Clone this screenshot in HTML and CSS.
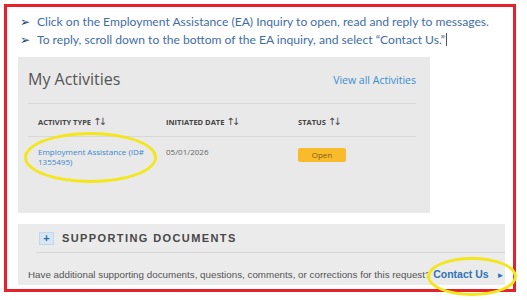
FILE: index.html
```html
<!DOCTYPE html>
<html lang="en">
<head>
  <meta charset="UTF-8" />
  <title>My Activities</title>
  <link rel="stylesheet" href="styles.css">
</head>
<body>

  <div class="frame">
    <ul class="steps">
      <li>Click on the Employment Assistance (EA) Inquiry to open, read and reply to messages.</li>
      <li>To reply, scroll down to the bottom of the EA inquiry, and select “Contact Us.”<span class="caret"></span></li>
    </ul>

    <div class="activities">
      <div class="act-head">
        <h2>My Activities</h2>
        <a class="view-all" href="#">View all Activities</a>
      </div>
      <div class="act-row act-cols">
        <div>ACTIVITY TYPE <span class="sort">↑↓</span></div>
        <div>INITIATED DATE <span class="sort">↑↓</span></div>
        <div>STATUS <span class="sort">↑↓</span></div>
      </div>
      <div class="act-row act-item">
        <a href="#">Employment Assistance (ID#<br>1355495)</a>
        <div>05/01/2026</div>
        <div><span class="badge">Open</span></div>
      </div>
    </div>

    <div class="docs">
      <div class="docs-head">
        <span class="plus">+</span>
        <span class="docs-title">SUPPORTING DOCUMENTS</span>
      </div>
      <p class="docs-text">Have additional supporting documents, questions, comments, or corrections for this request? <a href="#">Contact Us <span class="tri">►</span></a></p>
    </div>

    <!-- highlight rings drawn over the screenshot -->
    <div class="ring ring-activity"></div>
    <div class="ring ring-contact"></div>
  </div>

</body>
</html>
```

FILE: styles.css
```css
body {
  margin: 0;
  background: #fff;
  font-family: 'Open Sans', sans-serif;
}

.frame {
  position: relative;
  box-sizing: border-box;
  margin: 4px;
  width: 512px;
  height: 288px;
  border: 3px solid #e62129;
  padding: 6px 0 0 11px;
}

.steps {
  list-style: none;
  margin: 0;
  padding: 0 0 0 2px;
  font-family: Lato, sans-serif;
  font-size: 12.1px;
  line-height: 18px;
  color: #3f6da6;
}

.steps li {
  height: 18px;
}

.steps li::before {
  content: "➢";
  display: inline-block;
  width: 17px;
  font-family: 'DejaVu Sans', sans-serif;
  font-size: 12px;
  line-height: 18px;
  color: #23477a;
}

.caret {
  display: inline-block;
  width: 1px;
  height: 13px;
  margin-left: 1px;
  vertical-align: -2px;
  background: #555;
}

/* My Activities card */
.activities {
  box-sizing: border-box;
  width: 412px;
  height: 156px;
  margin-top: 8px;
  padding: 0 14px 0 10px;
  background: #e9e9e9;
}

.act-head {
  box-sizing: border-box;
  display: flex;
  justify-content: space-between;
  align-items: center;
  height: 47px;
  padding-bottom: 3px;
  border-bottom: 1px solid #d8d8d8;
}

.act-head h2 {
  margin: 0;
  font-size: 16px;
  font-weight: 400;
  color: #555;
}

.view-all {
  margin-top: 3px;
  font-size: 10.5px;
  color: #3b8cd0;
  text-decoration: none;
}

.act-row {
  display: grid;
  grid-template-columns: 128px 132px 1fr;
  padding-left: 10px;
}

.act-cols {
  height: 33px;
  align-items: center;
  padding-top: 2px;
  box-sizing: border-box;
  border-bottom: 1px solid #d8d8d8;
  font-size: 7.5px;
  font-weight: 700;
  color: #444;
}

.sort {
  font-family: 'DejaVu Sans', sans-serif;
  font-weight: 400;
  font-size: 10px;
  letter-spacing: -3px;
  color: #444;
}

.act-item {
  padding-top: 10px;
  font-size: 8px;
  line-height: 10px;
  color: #666;
}

.act-item a {
  color: #3a87cc;
  text-decoration: none;
}

.badge {
  display: inline-block;
  width: 48px;
  height: 14px;
  margin-top: 1px;
  border-radius: 2px;
  background: #f9bb2c;
  text-align: center;
  line-height: 14px;
  font-size: 8px;
  color: #80600f;
}

/* Supporting documents card */
.docs {
  box-sizing: border-box;
  width: 487px;
  height: 61px;
  margin-top: 11px;
  background: #ebebeb;
  font-family: 'Liberation Sans', Arial, sans-serif;
}

.docs-head {
  display: flex;
  align-items: center;
  gap: 8px;
  height: 28px;
  margin-left: 18px;
  padding-left: 3px;
  border-bottom: 1px solid #d6d6d6;
}

.plus {
  box-sizing: border-box;
  width: 15px;
  height: 13px;
  border: 1px solid #c3d6ea;
  background: #d7e6f5;
  color: #2e6aa3;
  font-size: 11px;
  font-weight: 700;
  line-height: 11px;
  text-align: center;
}

.docs-title {
  font-size: 11px;
  font-weight: 700;
  letter-spacing: 1.4px;
  color: #484848;
}

.docs-text {
  margin: 0;
  padding: 15px 0 0 10px;
  font-size: 9.8px;
  line-height: 12px;
  color: #555;
  white-space: nowrap;
}

.docs-text a {
  font-size: 10.5px;
  font-weight: 700;
  color: #2f74b5;
  text-decoration: none;
}

.tri {
  font-size: 8px;
  margin-left: 5px;
}

.ring {
  position: absolute;
  border: 3px solid #f3e61a;
  border-radius: 50%;
}

.ring-activity {
  left: 17px;
  top: 125px;
  width: 127px;
  height: 45px;
}

.ring-contact {
  left: 420px;
  top: 250px;
  width: 84px;
  height: 33px;
}
```
